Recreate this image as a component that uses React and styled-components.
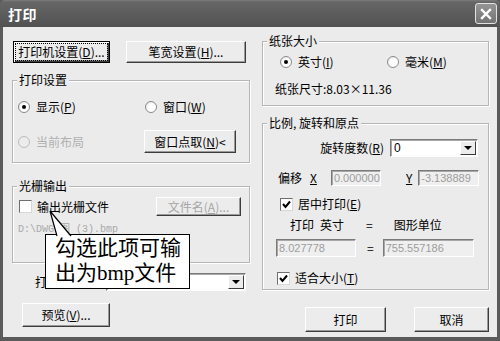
import React from "react";
import styled, { createGlobalStyle } from "styled-components";

const GlobalStyle = createGlobalStyle`
  html, body {
    margin: 0;
    padding: 0;
    background: #565656;
  }
  body {
    font-family: "Noto Sans CJK SC", "Liberation Sans", sans-serif;
    font-size: 12px;
    color: #000;
  }
`;

const Window = styled.div`
  width: 500px;
  height: 341px;
  display: flex;
  flex-direction: column;
  background: #5a5a5a;
  overflow: hidden;
`;

const TitleBar = styled.div`
  height: 27px;
  flex-shrink: 0;
  display: flex;
  align-items: center;
  padding: 0 3px 0 8px;
  box-sizing: border-box;
  background: linear-gradient(#7c7c7c 0px, #666 2px, #5e5e5e 12px, #515151 27px);
  border-radius: 5px 5px 0 0;
`;

const Title = styled.div`
  color: #fff;
  font-weight: 700;
  font-size: 14px;
  line-height: 16px;
  letter-spacing: 0.5px;
`;

const CloseBtn = styled.div`
  margin-left: auto;
  width: 22px;
  height: 21px;
  box-sizing: border-box;
  border: 1px solid #e2e2e2;
  border-radius: 3px;
  background: linear-gradient(#959595, #747474);
  display: flex;
  align-items: center;
  justify-content: center;
`;

const Frame = styled.div`
  flex: 1;
  display: flex;
  padding: 0 3px 4px 3px;
`;

const Body = styled.div`
  flex: 1;
  position: relative;
  display: flex;
  gap: 12px;
  padding: 7px 8px 0 9px;
  background: #ebebeb;
`;

const Column = styled.div`
  width: ${(p) => p.$w}px;
  display: flex;
  flex-direction: column;
`;

const Row = styled.div`
  display: flex;
  align-items: center;
  height: ${(p) => p.$h || 14}px;
  margin-top: ${(p) => p.$mt || 0}px;
  padding-left: ${(p) => p.$pl || 0}px;
  padding-right: ${(p) => p.$pr || 0}px;
  justify-content: ${(p) => p.$justify || "flex-start"};
  gap: ${(p) => p.$gap || 0}px;
`;

const GridRow = styled(Row)`
  display: grid;
  grid-template-columns: ${(p) => p.$col}px auto;
  align-items: center;
`;

const Group = styled.div`
  box-sizing: border-box;
  height: ${(p) => p.$h}px;
  margin-top: ${(p) => p.$mt}px;
  border: 1px solid #b6b6b6;
  box-shadow: inset 1px 1px 0 #fff, 1px 1px 0 #fff;
  display: flex;
  flex-direction: column;
`;

const Legend = styled.div`
  align-self: flex-start;
  margin: -8px 0 0 4px;
  padding: 0 2px;
  height: 14px;
  line-height: 14px;
  background: #ebebeb;
`;

const Text = styled.span`
  line-height: 14px;
  white-space: nowrap;
  color: ${(p) => (p.$disabled ? "#a9a9a9" : "#000")};
  margin-left: ${(p) => p.$ml || 0}px;
`;

const Btn = styled.button`
  box-sizing: border-box;
  width: ${(p) => p.$w}px;
  height: ${(p) => p.$h || 22}px;
  margin-left: ${(p) => p.$ml || 0}px;
  padding: 0;
  font: inherit;
  line-height: 14px;
  color: ${(p) => (p.disabled ? "#a6a6a6" : "#000")};
  background: #ececec;
  border: 1px solid;
  border-color: ${(p) => (p.$default ? "#000" : "#fff #3c3c3c #3c3c3c #fff")};
  box-shadow: ${(p) =>
    p.$default
      ? "inset 1px 1px 0 #fff, inset -1px -1px 0 #3c3c3c, inset -2px -2px 0 #9a9a9a"
      : "inset -1px -1px 0 #9a9a9a"};
  display: flex;
  align-items: center;
  justify-content: center;
  white-space: nowrap;
`;

const Focus = styled.span`
  outline: 1px dotted #000;
  outline-offset: 1px;
  padding: 0 1px;
`;

const RadioDot = styled.span`
  width: 12px;
  height: 12px;
  box-sizing: border-box;
  border-radius: 50%;
  flex-shrink: 0;
  border: 1px solid ${(p) => (p.$disabled ? "#bcbcbc" : "#8a8a8a")};
  background: ${(p) =>
    p.$disabled ? "#ececec" : "radial-gradient(circle at 65% 65%, #fff 45%, #dcdcdc)"};
  display: flex;
  align-items: center;
  justify-content: center;
  margin-right: 6px;
  &::after {
    content: "";
    display: ${(p) => (p.$on ? "block" : "none")};
    width: 4px;
    height: 4px;
    border-radius: 50%;
    background: #000;
  }
`;

const Label = styled.label`
  display: flex;
  align-items: center;
  line-height: 14px;
  white-space: nowrap;
  margin-left: ${(p) => p.$ml || 0}px;
  color: ${(p) => (p.$disabled ? "#b0b0b0" : "#000")};
`;

const CheckBox = styled.span`
  width: 13px;
  height: 13px;
  box-sizing: border-box;
  flex-shrink: 0;
  border: 1px solid;
  border-color: #6e6e6e #d8d8d8 #d8d8d8 #6e6e6e;
  background: #fff;
  margin-right: 5px;
  display: flex;
  align-items: center;
  justify-content: center;
`;

const Field = styled.div`
  box-sizing: border-box;
  width: ${(p) => p.$w}px;
  height: ${(p) => p.$h || 18}px;
  margin-left: ${(p) => p.$ml || 0}px;
  border: 1px solid;
  border-color: #7a7a7a #fff #fff #7a7a7a;
  box-shadow: inset 1px 1px 0 #a8a8a8;
  background: ${(p) => (p.$disabled ? "#efefef" : "#fff")};
  color: ${(p) => (p.$disabled ? "#9d9d9d" : "#000")};
  font-family: "Liberation Sans", "Noto Sans CJK SC", sans-serif;
  font-size: 11px;
  display: flex;
  align-items: center;
  padding-left: 2px;
  white-space: nowrap;
  overflow: hidden;
`;

const Combo = styled(Field)`
  font-size: 12px;
  padding-left: 3px;
  padding-right: 1px;
  justify-content: space-between;
`;

const ArrowBtn = styled.span`
  width: 16px;
  height: 14px;
  box-sizing: border-box;
  background: #ececec;
  border: 1px solid;
  border-color: #fff #3c3c3c #3c3c3c #fff;
  display: flex;
  align-items: center;
  justify-content: center;
  &::after {
    content: "";
    border-left: 4px solid transparent;
    border-right: 4px solid transparent;
    border-top: 4px solid #000;
  }
`;

const PathText = styled.div`
  margin-top: 7px;
  padding-left: 5px;
  line-height: 14px;
  font-family: "Liberation Mono", "Noto Sans CJK SC", monospace;
  font-size: 10px;
  color: #a9a9a9;
  white-space: nowrap;
`;

const Callout = styled.div`
  position: absolute;
  left: 42px;
  top: 207px;
  width: 145px;
  height: 55px;
  box-sizing: border-box;
  background: #fff;
  border: 1.5px solid #000;
  padding: 1px 0 0 9px;
  font-family: "Liberation Serif", "Noto Sans CJK SC", serif;
  font-size: 21px;
  line-height: 25px;
  color: #000;
  white-space: nowrap;
`;

const Pointer = styled.svg`
  position: absolute;
  left: 0;
  top: -24px;
  overflow: visible;
`;

const U = styled.u`
  text-underline-offset: 1px;
`;

const Key = ({ k }) => (
  <>
    (<U>{k}</U>)
  </>
);

const Radio = ({ on, disabled, children, ml }) => (
  <Label $disabled={disabled} $ml={ml}>
    <RadioDot $on={on} $disabled={disabled} />
    {children}
  </Label>
);

const Check = ({ on, children, ml }) => (
  <Label $ml={ml}>
    <CheckBox>
      {on && (
        <svg width="9" height="9" viewBox="0 0 9 9">
          <polyline points="1,4 3.5,7 8,1.5" fill="none" stroke="#000" strokeWidth="2" />
        </svg>
      )}
    </CheckBox>
    {children}
  </Label>
);

export default function App() {
  return (
    <>
      <GlobalStyle />
      <Window>
        <TitleBar>
          <Title>打印</Title>
          <CloseBtn>
            <svg width="12" height="12" viewBox="0 0 12 12">
              <path d="M2 2 L10 10 M10 2 L2 10" stroke="#fff" strokeWidth="2.4" strokeLinecap="square" />
            </svg>
          </CloseBtn>
        </TitleBar>
        <Frame>
          <Body>
            <Column $w={238}>
              <Row $h={22} $mt={7}>
                <Btn $w={97} $ml={1} $default>
                  <Focus>
                    打印机设置<Key k="D" />...
                  </Focus>
                </Btn>
                <Btn $w={120} $ml={16}>
                  笔宽设置<Key k="H" />...
                </Btn>
              </Row>

              <Group $h={83} $mt={17}>
                <Legend>打印设置</Legend>
                <GridRow $col={127} $mt={13} $pl={5}>
                  <Radio on>
                    显示<Key k="P" />
                  </Radio>
                  <Radio>
                    窗口<Key k="W" />
                  </Radio>
                </GridRow>
                <GridRow $col={126} $h={23} $mt={16} $pl={5}>
                  <Radio disabled>当前布局</Radio>
                  <Btn $w={92} $h={23}>
                    窗口点取<Key k="N" />&lt;
                  </Btn>
                </GridRow>
              </Group>

              <Group $h={77} $mt={23}>
                <Legend>光栅输出</Legend>
                <GridRow $col={137} $h={19} $mt={4} $pl={6}>
                  <Check>输出光栅文件</Check>
                  <Btn $w={85} $h={19} disabled>
                    文件名<Key k="A" />...
                  </Btn>
                </GridRow>
                <PathText>D:\DWG\图 (3).bmp</PathText>
              </Group>

              <Row $h={18} $mt={10} $pl={23} $justify="space-between" $pr={4}>
                <Text>打印样式表</Text>
                <Combo $w={140}>
                  <span>无</span>
                  <ArrowBtn />
                </Combo>
              </Row>

              <Row $h={24} $mt={12}>
                <Btn $w={88} $h={24} $ml={10}>
                  预览<Key k="V" />...
                </Btn>
              </Row>
            </Column>

            <Column $w={227}>
              <Group $h={65} $mt={7}>
                <Legend>纸张大小</Legend>
                <GridRow $col={107} $mt={7} $pl={17}>
                  <Radio on>
                    英寸<Key k="I" />
                  </Radio>
                  <Radio>
                    毫米<Key k="M" />
                  </Radio>
                </GridRow>
                <Row $mt={13} $pl={12}>
                  <Text>纸张尺寸:8.03×11.36</Text>
                </Row>
              </Group>

              <Group $h={167} $mt={17}>
                <Legend>比例, 旋转和原点</Legend>
                <Row $h={18} $mt={9} $justify="flex-end" $pr={10} $gap={6}>
                  <Text>
                    旋转度数<Key k="R" />
                  </Text>
                  <Combo $w={88}>
                    <span>0</span>
                    <ArrowBtn />
                  </Combo>
                </Row>
                <Row $h={16} $mt={13} $pl={15}>
                  <Text>偏移</Text>
                  <Text $ml={8}>
                    <U>X</U>
                  </Text>
                  <Field $w={50} $h={16} $ml={14} $disabled>
                    0.000000
                  </Field>
                  <Text $ml={25}>
                    <U>Y</U>
                  </Text>
                  <Field $w={61} $h={16} $ml={6} $disabled>
                    -3.138889
                  </Field>
                </Row>
                <Row $mt={11} $pl={17}>
                  <Check on>
                    居中打印<Key k="E" />
                  </Check>
                </Row>
                <Row $mt={7} $pl={27}>
                  <Text>打印</Text>
                  <Text $ml={6}>英寸</Text>
                  <Text $ml={22}>=</Text>
                  <Text $ml={21}>图形单位</Text>
                </Row>
                <Row $h={18} $mt={7} $pl={13}>
                  <Field $w={80} $disabled>
                    8.027778
                  </Field>
                  <Text $ml={11}>=</Text>
                  <Field $w={91} $ml={9} $disabled>
                    755.557186
                  </Field>
                </Row>
                <Row $mt={14} $pl={14}>
                  <Check on>
                    适合大小<Key k="T" />
                  </Check>
                </Row>
              </Group>

              <Row $h={25} $mt={17}>
                <Btn $w={81} $h={25} $ml={43}>
                  打印
                </Btn>
                <Btn $w={75} $h={25} $ml={28}>
                  取消
                </Btn>
              </Row>
            </Column>

            <Callout>
              <Pointer width="30" height="26" viewBox="0 0 30 26">
                <polygon points="4,0 11,26 25,26" fill="#fff" />
                <path d="M4 0 L11 25 M4 0 L25 25" stroke="#000" strokeWidth="1.2" fill="none" />
              </Pointer>
              勾选此项可输
              <br />
              出为bmp文件
            </Callout>
          </Body>
        </Frame>
      </Window>
    </>
  );
}
